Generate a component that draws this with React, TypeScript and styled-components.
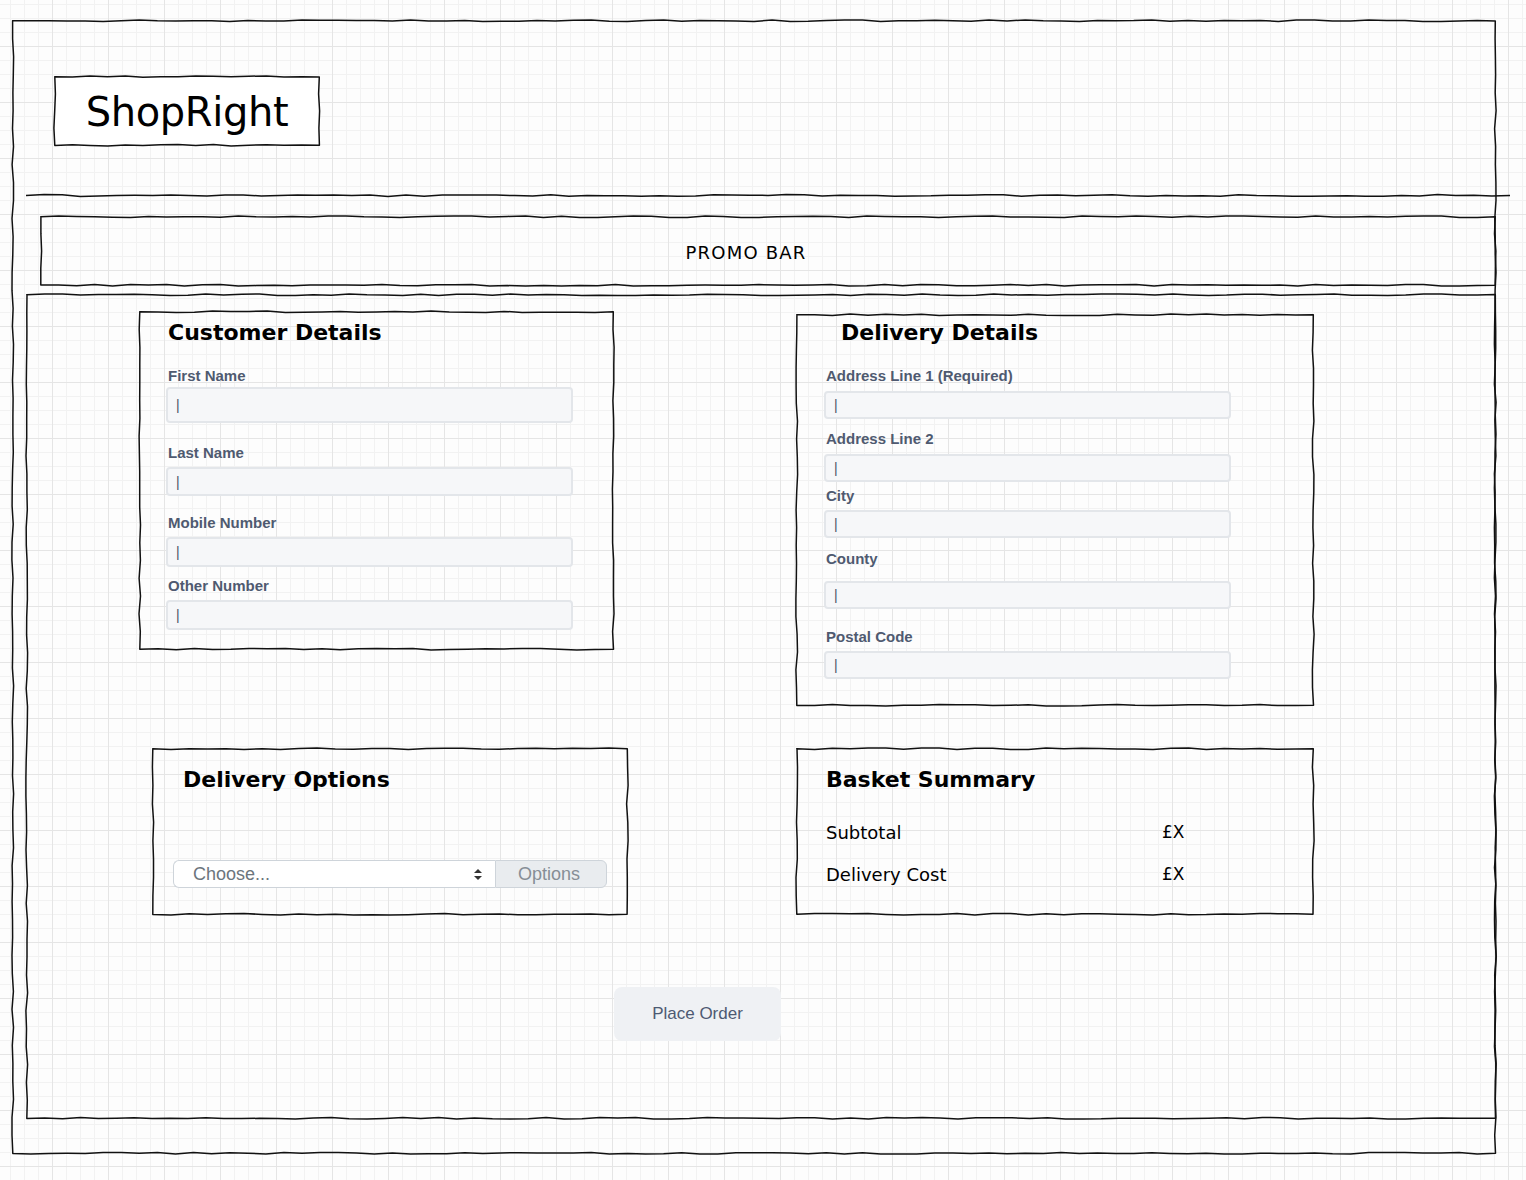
import React, { useMemo } from "react";
import styled, { createGlobalStyle } from "styled-components";

const GlobalStyle = createGlobalStyle`
  html, body {
    margin: 0;
    padding: 0;
    min-height: 1180px;
    background-color: #fdfdfd;
    background-image:
      linear-gradient(to right, #e5e5e5 0 1.5px, transparent 1.5px),
      linear-gradient(to bottom, #e5e5e5 0 1.5px, transparent 1.5px),
      linear-gradient(to right, #f2f2f2 0 1px, transparent 1px),
      linear-gradient(to bottom, #f2f2f2 0 1px, transparent 1px);
    background-size: 56px 56px, 56px 56px, 14px 14px, 14px 14px;
    background-position: 52px 46px, 52px 46px, 52px 46px, 52px 46px;
    font-family: "DejaVu Sans", Verdana, sans-serif;
    color: #000;
  }
  * { box-sizing: border-box; }
`;

/* ---------- sketchy line drawing ---------- */

const makeRng = (seed: number) => {
  let s = seed | 0;
  return () => {
    s = (s + 0x6d2b79f5) | 0;
    let t = Math.imul(s ^ (s >>> 15), 1 | s);
    t = (t + Math.imul(t ^ (t >>> 7), 61 | t)) ^ t;
    return ((t ^ (t >>> 14)) >>> 0) / 4294967296;
  };
};

const edgePoints = (
  x1: number,
  y1: number,
  x2: number,
  y2: number,
  r: () => number,
  amp: number
) => {
  const len = Math.hypot(x2 - x1, y2 - y1);
  const n = Math.max(2, Math.round(len / 18));
  const nx = -(y2 - y1) / len;
  const ny = (x2 - x1) / len;
  const pts: string[] = [];
  for (let i = 1; i <= n; i++) {
    const t = i / n;
    const o = i === n ? (r() - 0.5) * 0.6 : (r() * 2 - 1) * amp;
    const px = x1 + (x2 - x1) * t + nx * o;
    const py = y1 + (y2 - y1) * t + ny * o;
    pts.push(`L${px.toFixed(1)} ${py.toFixed(1)}`);
  }
  return pts.join(" ");
};

const BorderSvg = styled.svg`
  position: absolute;
  left: 0;
  top: 0;
  width: 100%;
  height: 100%;
  overflow: visible;
  pointer-events: none;
`;

const SketchBorder: React.FC<{ w: number; h: number; seed: number }> = ({ w, h, seed }) => {
  const d = useMemo(() => {
    const r = makeRng(seed);
    const i = 0.75;
    return [
      `M${i} ${i}`,
      edgePoints(i, i, w - i, i, r, 0.9),
      edgePoints(w - i, i, w - i, h - i, r, 0.9),
      edgePoints(w - i, h - i, i, h - i, r, 0.9),
      edgePoints(i, h - i, i, i, r, 0.9),
      "Z",
    ].join(" ");
  }, [w, h, seed]);
  return (
    <BorderSvg viewBox={`0 0 ${w} ${h}`} preserveAspectRatio="none">
      <path d={d} fill="none" stroke="#111" strokeWidth={1.5} strokeLinejoin="round" />
    </BorderSvg>
  );
};

const SketchLine: React.FC<{ w: number; seed: number }> = ({ w, seed }) => {
  const d = useMemo(() => {
    const r = makeRng(seed);
    return `M0 1.5 ${edgePoints(0, 1.5, w, 1.5, r, 0.9)}`;
  }, [w, seed]);
  return (
    <BorderSvg viewBox={`0 0 ${w} 3`} preserveAspectRatio="none">
      <path d={d} fill="none" stroke="#111" strokeWidth={1.5} />
    </BorderSvg>
  );
};

/* ---------- layout ---------- */

const Canvas = styled.div`
  padding: 20px 0 0 12px;
`;

const OuterFrame = styled.div`
  position: relative;
  width: 1484px;
  height: 1134px;
  display: flex;
  flex-direction: column;
  align-items: flex-start;
`;

const LogoBox = styled.div`
  position: relative;
  width: 266px;
  height: 70px;
  margin: 56px 0 0 42px;
  background: #fff;
  display: flex;
  align-items: center;
  justify-content: center;
  font-family: "DejaVu Sans", Verdana, sans-serif;
  font-size: 40px;
  letter-spacing: -0.4px;
  padding-top: 2px;
`;

const Divider = styled.div`
  position: relative;
  width: 1484px;
  height: 3px;
  margin: 48px 0 0 14px;
`;

const PromoBar = styled.div`
  position: relative;
  width: 1456px;
  height: 70px;
  margin: 19px 0 0 28px;
  display: flex;
  align-items: center;
  justify-content: center;
  font-family: "DejaVu Sans", Verdana, sans-serif;
  font-size: 18px;
  letter-spacing: 1.2px;
  padding: 2px 44px 0 0;
`;

const MainFrame = styled.div`
  position: relative;
  width: 1470px;
  height: 825px;
  margin: 8px 0 0 14px;
  padding: 17px 0 0 113px;
  display: grid;
  grid-template-columns: 657px 518px;
  row-gap: 42px;
  align-items: start;
  align-content: start;
`;

const Panel = styled.section<{ $w: number; $h: number; $mt?: number; $ml?: number; $pt: number }>`
  position: relative;
  width: ${(p) => p.$w}px;
  height: ${(p) => p.$h}px;
  margin-top: ${(p) => p.$mt ?? 0}px;
  margin-left: ${(p) => p.$ml ?? 0}px;
  padding-top: ${(p) => p.$pt}px;
  display: flex;
  flex-direction: column;
  align-items: flex-start;
`;

const Title = styled.h2<{ $ml: number }>`
  margin: 0 0 0 ${(p) => p.$ml}px;
  font-family: "DejaVu Sans", Verdana, sans-serif;
  font-weight: 700;
  font-size: 22px;
  line-height: 26px;
  color: #000;
`;

const Fields = styled.div<{ $pl: number }>`
  display: flex;
  flex-direction: column;
  padding-left: ${(p) => p.$pl}px;
`;

const Label = styled.label<{ $mt: number }>`
  display: block;
  margin-top: ${(p) => p.$mt}px;
  padding-left: 2px;
  font-family: "Liberation Sans", Arial, sans-serif;
  font-weight: 700;
  font-size: 15px;
  line-height: 16px;
  color: #4f5a70;
`;

const TextInput = styled.input<{ $mt: number; $h: number }>`
  display: block;
  width: 407px;
  height: ${(p) => p.$h}px;
  margin-top: ${(p) => p.$mt}px;
  border: 2px solid #e3e6ea;
  border-radius: 4px;
  background: #f6f7f9;
  padding: 0 0 0 8px;
  font-family: "Liberation Sans", Arial, sans-serif;
  font-size: 14px;
  color: #4a5568;
  outline: none;
  &::placeholder {
    color: #4a5568;
    opacity: 1;
  }
`;

const SelectGroup = styled.div`
  display: flex;
  margin: 67px 0 0 21px;
  height: 28px;
`;

const SelectBox = styled.div`
  width: 322px;
  height: 28px;
  display: flex;
  align-items: center;
  justify-content: space-between;
  padding: 0 12px 0 19px;
  background: #fff;
  border: 1px solid #ced4da;
  border-right: none;
  border-radius: 6px 0 0 6px;
  font-family: "Liberation Sans", Arial, sans-serif;
  font-size: 18px;
  color: #6c757d;
`;

const Addon = styled.div`
  width: 112px;
  height: 28px;
  display: flex;
  align-items: center;
  justify-content: center;
  background: #e9ecef;
  border: 1px solid #ced4da;
  border-radius: 0 6px 6px 0;
  font-family: "Liberation Sans", Arial, sans-serif;
  font-size: 18px;
  color: #868e96;
  padding-right: 4px;
`;

const SummaryGrid = styled.div`
  display: grid;
  grid-template-columns: 336px auto;
  row-gap: 22px;
  margin: 30px 0 0 30px;
  font-family: "DejaVu Sans", Verdana, sans-serif;
  font-size: 18px;
  line-height: 20px;
  color: #000;
`;

const SummaryValue = styled.span`
  margin-top: -1px;
  font-size: 17px;
`;

const ButtonRow = styled.div`
  grid-column: 1 / -1;
  margin: 30px 0 0 475px;
`;

const PlaceOrder = styled.button`
  width: 167px;
  height: 54px;
  border: none;
  border-radius: 8px;
  background: #eff1f4;
  font-family: "Liberation Sans", Arial, sans-serif;
  font-size: 17px;
  color: #4d5a72;
  cursor: pointer;
`;

const UpDown = () => (
  <svg width="10" height="13" viewBox="0 0 10 13">
    <path d="M5 1 L9 5 L1 5 Z" fill="#333" />
    <path d="M5 12 L9 8 L1 8 Z" fill="#333" />
  </svg>
);

type FieldDef = { label: string; mt: number; gap: number; h: number };

const customerFields: FieldDef[] = [
  { label: "First Name", mt: 22, gap: 3, h: 36 },
  { label: "Last Name", mt: 22, gap: 6, h: 29 },
  { label: "Mobile Number", mt: 19, gap: 6, h: 30 },
  { label: "Other Number", mt: 11, gap: 6, h: 30 },
];

const deliveryFields: FieldDef[] = [
  { label: "Address Line 1 (Required)", mt: 22, gap: 7, h: 28 },
  { label: "Address Line 2", mt: 12, gap: 7, h: 28 },
  { label: "City", mt: 6, gap: 6, h: 28 },
  { label: "County", mt: 13, gap: 14, h: 28 },
  { label: "Postal Code", mt: 20, gap: 6, h: 28 },
];

const FieldList: React.FC<{ fields: FieldDef[]; pl: number }> = ({ fields, pl }) => (
  <Fields $pl={pl}>
    {fields.map((f) => (
      <React.Fragment key={f.label}>
        <Label $mt={f.mt}>{f.label}</Label>
        <TextInput $mt={f.gap} $h={f.h} placeholder="|" />
      </React.Fragment>
    ))}
  </Fields>
);

export default function App() {
  return (
    <>
      <GlobalStyle />
      <Canvas>
        <OuterFrame>
          <SketchBorder w={1484} h={1134} seed={11} />
          <LogoBox>
            <SketchBorder w={266} h={70} seed={3} />
            ShopRight
          </LogoBox>
          <Divider>
            <SketchLine w={1484} seed={7} />
          </Divider>
          <PromoBar>
            <SketchBorder w={1456} h={70} seed={19} />
            PROMO BAR
          </PromoBar>
          <MainFrame>
            <SketchBorder w={1470} h={825} seed={23} />

            <Panel $w={475} $h={339} $pt={9}>
              <SketchBorder w={475} h={339} seed={31} />
              <Title $ml={29}>Customer Details</Title>
              <FieldList fields={customerFields} pl={27} />
            </Panel>

            <Panel $w={518} $h={392} $mt={3} $pt={6}>
              <SketchBorder w={518} h={392} seed={37} />
              <Title $ml={45}>Delivery Details</Title>
              <FieldList fields={deliveryFields} pl={28} />
            </Panel>

            <Panel $w={476} $h={167} $ml={13} $pt={19}>
              <SketchBorder w={476} h={167} seed={41} />
              <Title $ml={31}>Delivery Options</Title>
              <SelectGroup>
                <SelectBox>
                  <span>Choose...</span>
                  <UpDown />
                </SelectBox>
                <Addon>Options</Addon>
              </SelectGroup>
            </Panel>

            <Panel $w={518} $h={167} $pt={19}>
              <SketchBorder w={518} h={167} seed={43} />
              <Title $ml={30}>Basket Summary</Title>
              <SummaryGrid>
                <span>Subtotal</span>
                <SummaryValue>£X</SummaryValue>
                <span>Delivery Cost</span>
                <SummaryValue>£X</SummaryValue>
              </SummaryGrid>
            </Panel>

            <ButtonRow>
              <PlaceOrder type="button">Place Order</PlaceOrder>
            </ButtonRow>
          </MainFrame>
        </OuterFrame>
      </Canvas>
    </>
  );
}
